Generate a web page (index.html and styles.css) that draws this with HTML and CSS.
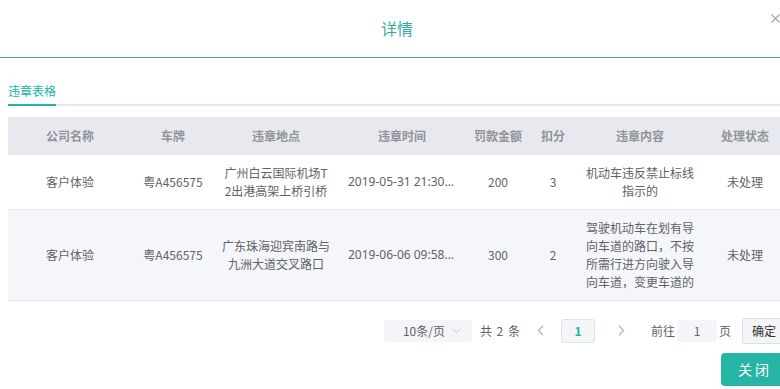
FILE: index.html
```html
<!DOCTYPE html>
<html>
<head>
<meta charset="UTF-8">
<title>详情</title>
<link rel="stylesheet" href="styles.css">
</head>
<body>

<div class="dialog">
	<!-- 头部 -->
	<div class="dialogHeader">
		<span class="dialogTitle">详情</span>
		<span class="closeIcon">
			<svg width="9" height="9" viewBox="0 0 9 9"><path d="M0.5 0.5 L8.5 8.5 M8.5 0.5 L0.5 8.5" stroke="#a3a6ad" stroke-width="1.1" fill="none"/></svg>
		</span>
	</div>

	<div class="dialogBody">
		<!-- 标签 -->
		<div class="tabs">
			<div class="tabItem active">违章表格</div>
		</div>
		<div class="tabBar"><div class="tabActiveBar"></div></div>

		<!-- 违章表格 -->
		<table class="grid">
			<colgroup>
				<col style="width:124px">
				<col style="width:82px">
				<col style="width:124px">
				<col style="width:128px">
				<col style="width:64px">
				<col style="width:46px">
				<col style="width:128px">
				<col style="width:82px">
			</colgroup>
			<thead>
				<tr>
					<th>公司名称</th>
					<th>车牌</th>
					<th>违章地点</th>
					<th>违章时间</th>
					<th>罚款金额</th>
					<th>扣分</th>
					<th>违章内容</th>
					<th>处理状态</th>
				</tr>
			</thead>
			<tbody>
				<tr>
					<td>客户体验</td>
					<td>粤A456575</td>
					<td>广州白云国际机场T2出港高架上桥引桥</td>
					<td class="timeCell"><div class="ellipsis">2019-05-31 21:30:00</div></td>
					<td>200</td>
					<td>3</td>
					<td>机动车违反禁止标线指示的</td>
					<td>未处理</td>
				</tr>
				<tr class="striped">
					<td>客户体验</td>
					<td>粤A456575</td>
					<td>广东珠海迎宾南路与九洲大道交叉路口</td>
					<td class="timeCell"><div class="ellipsis">2019-06-06 09:58:00</div></td>
					<td>300</td>
					<td>2</td>
					<td>驾驶机动车在划有导向车道的路口，不按所需行进方向驶入导向车道，变更车道的</td>
					<td>未处理</td>
				</tr>
			</tbody>
		</table>

		<!-- 分页 -->
		<div class="pager">
			<div class="sizeSelect">
				<span>10条/页</span>
				<svg width="9" height="6" viewBox="0 0 9 6"><path d="M0.5 0.8 L4.5 4.8 L8.5 0.8" stroke="#c0c4cc" stroke-width="1" fill="none"/></svg>
			</div>
			<span class="total">共 2 条</span>
			<span class="arrow prev">
				<svg width="7" height="11" viewBox="0 0 7 11"><path d="M6 0.8 L1.5 5.5 L6 10.2" stroke="#b4b8c0" stroke-width="1.4" fill="none"/></svg>
			</span>
			<span class="pageNum">1</span>
			<span class="arrow next">
				<svg width="7" height="11" viewBox="0 0 7 11"><path d="M1 0.8 L5.5 5.5 L1 10.2" stroke="#b4b8c0" stroke-width="1.4" fill="none"/></svg>
			</span>
			<span class="jump">前往</span>
			<span class="jumpInput">1</span>
			<span class="jumpUnit">页</span>
			<span class="confirmBtn">确定</span>
		</div>

		<div class="footer">
			<span class="closeBtn">关 闭</span>
		</div>
	</div>
</div>

</body>
</html>
```

FILE: styles.css
```css
/* 기본 스타일 */
html, body {
	margin: 0;
	padding: 0;
	overflow: hidden;
	background: #fff;
	font-family: "Noto Sans CJK SC", "Noto Sans", sans-serif;
	font-size: 12px;
	color: #606266;
}

.dialog {
	width: 794px;
}

/* 头部 */
.dialogHeader {
	position: relative;
	height: 57px;
	border-bottom: 1px solid #38b39b;
	display: flex;
	align-items: center;
	justify-content: center;
}
.dialogTitle {
	font-size: 16px;
	color: #33b09d;
	margin-top: -2px;
}
.closeIcon {
	position: absolute;
	top: 14px;
	right: 14px;
	line-height: 0;
}

.dialogBody {
	padding: 20px 8px 0 8px;
}

/* 标签 */
.tabs {
	display: flex;
	height: 26px;
}
.tabItem {
	line-height: 26px;
	font-size: 12px;
	color: #20b4a3;
}
.tabBar {
	height: 2px;
	background: #e4e7ed;
}
.tabActiveBar {
	width: 48px;
	height: 2px;
	background: #25b5a5;
}

/* 表格 */
.grid {
	margin-top: 11px;
	width: 778px;
	table-layout: fixed;
	border-collapse: collapse;
}
.grid th {
	background: #e8e9ee;
	color: #909399;
	font-weight: bold;
	padding: 10px 0;
	line-height: 18px;
	text-align: center;
	white-space: nowrap;
}
.grid td {
	padding: 9px 8px 8px 8px;
	line-height: 18.3px;
	text-align: center;
	border-bottom: 1px solid #e8eaf0;
	word-break: break-all;
}
.grid td.timeCell {
	padding-left: 10px;
	padding-right: 10px;
	font-family: "Noto Sans", "Noto Sans CJK SC", sans-serif;
}
.grid .striped td {
	background: #f5f6fa;
}
.ellipsis {
	white-space: nowrap;
	overflow: hidden;
	text-overflow: ellipsis;
}

/* 分页 */
.pager {
	margin-top: 17px;
	height: 26px;
	display: flex;
	align-items: center;
	justify-content: flex-end;
	color: #606266;
}
.sizeSelect {
	width: 88px;
	height: 22px;
	box-sizing: border-box;
	background: #f4f5f9;
	border-radius: 3px;
	display: flex;
	align-items: center;
	padding: 0 11px 0 19px;
	justify-content: space-between;
}
.total {
	margin-left: 8px;
	word-spacing: 2px;
}
.arrow {
	display: flex;
	align-items: center;
	line-height: 0;
}
.prev {
	margin-left: 17px;
}
.pageNum {
	margin-left: 17px;
	width: 34px;
	height: 24px;
	box-sizing: border-box;
	border: 1px solid #dce2ee;
	border-radius: 3px;
	background: #f4f5f9;
	color: #20b4a3;
	font-weight: bold;
	text-align: center;
	line-height: 22px;
}
.next {
	margin-left: 23px;
}
.jump {
	margin-left: 26px;
}
.jumpInput {
	margin-left: 2px;
	width: 40px;
	height: 22px;
	background: #f4f5f9;
	border-radius: 3px;
	text-align: center;
	line-height: 22px;
}
.jumpUnit {
	margin-left: 2px;
}
.confirmBtn {
	margin-left: 11px;
	width: 44px;
	height: 26px;
	box-sizing: border-box;
	border: 1px solid #dcdfe6;
	border-radius: 3px;
	background: #f4f5f9;
	text-align: center;
	line-height: 24px;
	color: #303133;
}

.footer {
	margin-top: 9px;
	display: flex;
	justify-content: flex-end;
}
.closeBtn {
	width: 65px;
	height: 33px;
	line-height: 33px;
	text-align: center;
	background: #25b5a5;
	color: #fff;
	border-radius: 4px;
	font-size: 14px;
}
```
